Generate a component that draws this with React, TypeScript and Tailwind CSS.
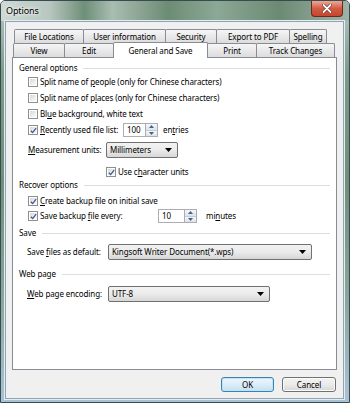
import type { ReactNode } from "react";

type Tab = { label: string; w: string; active?: boolean };

const ROW_BACK: Tab[] = [
  { label: "File Locations",   w: "w-[70px]" },
  { label: "User information", w: "w-[83px]" },
  { label: "Security",         w: "w-[52px]" },
  { label: "Export to PDF",    w: "w-[74px]" },
  { label: "Spelling",         w: "w-[38px]" },
];

const ROW_FRONT: Tab[] = [
  { label: "View",             w: "w-[52px]" },
  { label: "Edit",             w: "w-[50px]" },
  { label: "General and Save", w: "w-[95px]", active: true },
  { label: "Print",            w: "w-[50px]" },
  { label: "Track Changes",    w: "w-[79px]" },
];

function Check({ checked }: { checked?: boolean }) {
  return (
    <span className="w-[10px] h-[10px] shrink-0 border border-[#8e8f8f] bg-white p-px flex">
      <span className="flex-1 flex items-center justify-center bg-gradient-to-br from-[#d9d9d9] to-[#fbfbfb]">
        {checked && (
          <svg viewBox="0 0 8 8" className="w-[7px] h-[7px]">
            <path d="M1 4.3 L3 6.4 L7 1.2" stroke="#3d5a96" strokeWidth="1.5" fill="none" />
          </svg>
        )}
      </span>
    </span>
  );
}

function Arrow() {
  return (
    <svg viewBox="0 0 7 4" className="w-[7px] h-[4px] shrink-0">
      <path d="M0 0 H7 L3.5 4 Z" fill="#000" />
    </svg>
  );
}

function Combo({ value, w }: { value: string; w: string }) {
  return (
    <div className={`${w} h-[16px] shrink-0 rounded-[2px] border border-[#707070] bg-gradient-to-b from-[#f2f2f2] via-[#ebebeb] to-[#d6d6d6] flex items-center pl-[3px] pr-[5px] justify-between`}>
      <span className="whitespace-nowrap">{value}</span>
      <Arrow />
    </div>
  );
}

function Spin({ value, w }: { value: string; w: string }) {
  return (
    <div className="h-[14px] flex shrink-0">
      <div className={`${w} border border-[#abadb3] bg-white flex items-center pl-[3px]`}>{value}</div>
      <div className="w-[12px] flex flex-col border-y border-r border-[#abadb3] bg-white">
        <div className="flex-1 flex items-center justify-center bg-gradient-to-b from-[#f4f7fb] to-[#dbe3ec] border-b border-[#c3cbd5]">
          <svg viewBox="0 0 5 3" className="w-[5px] h-[3px]"><path d="M0 3 H5 L2.5 0 Z" fill="#4b5f80" /></svg>
        </div>
        <div className="flex-1 flex items-center justify-center bg-gradient-to-b from-[#f4f7fb] to-[#dbe3ec]">
          <svg viewBox="0 0 5 3" className="w-[5px] h-[3px]"><path d="M0 0 H5 L2.5 3 Z" fill="#4b5f80" /></svg>
        </div>
      </div>
    </div>
  );
}

function Group({ title, mt }: { title: string; mt: string }) {
  return (
    <div className={`${mt} h-[14px] flex items-center pl-[6px] pr-[6px]`}>
      <span className="whitespace-nowrap">{title}</span>
      <span className="flex-1 h-px bg-[#dcdfd6] ml-[6px] mt-px" />
    </div>
  );
}

function CheckRow({ checked, mt, children }: { checked?: boolean; mt: string; children: ReactNode }) {
  return (
    <div className={`${mt} h-[14px] flex items-center gap-[2px] pl-[15px] whitespace-nowrap`}>
      <Check checked={checked} />
      {children}
    </div>
  );
}

const U = ({ c }: { c: string }) => <span className="underline underline-offset-[1px]">{c}</span>;

function TabBtn({ t }: { t: Tab }) {
  return (
    <div
      className={`${t.w} -ml-px first:ml-0 shrink-0 whitespace-nowrap flex items-center justify-center border-x border-t border-[#898c95] rounded-t-[2px] ${
        t.active ? "h-[16px] -mt-px bg-white relative z-10" : "h-[14px] bg-gradient-to-b from-[#f6f6f6] to-[#dcdcdc]"
      }`}
    >
      {t.label}
    </div>
  );
}

export default function App() {
  return (
    <div className="w-[350px] h-[403px] overflow-hidden rounded-t-[5px] border border-[#3b4a52] bg-[linear-gradient(180deg,#b8c8c3_0%,#7c9a86_18%,#6f8f78_45%,#8aa79a_75%,#a9c3d6_100%)] flex flex-col font-['Noto_Sans',sans-serif] text-[8px] tracking-[-0.1px] leading-none text-black">
      {/* ── TITLE BAR ─────────────────────────────────────── */}
      <div className="h-[20px] shrink-0 flex items-start justify-between bg-[linear-gradient(90deg,#cfd9d5_0%,#b7c7bf_14%,#6e8f78_24%,#a9bdb1_32%,#6d8c74_48%,#8ca896_62%,#6c8a73_80%,#9fb3a8_100%)]">
        <span className="mt-[5px] ml-[5px] text-[9px] text-black [text-shadow:0_0_5px_#ffffff,0_0_3px_#ffffff]">Options</span>
        <div className="mr-[6px] w-[32px] h-[16px] rounded-b-[4px] border border-t-0 border-[#6b2a20] bg-gradient-to-b from-[#e9a897] via-[#d25a43] to-[#c8442d] flex items-center justify-center">
          <svg viewBox="0 0 10 9" className="w-[10px] h-[9px]">
            <path d="M1.5 1 L8.5 8 M8.5 1 L1.5 8" stroke="#5a2018" strokeWidth="3" strokeLinecap="round" />
            <path d="M1.5 1 L8.5 8 M8.5 1 L1.5 8" stroke="#ffffff" strokeWidth="1.8" strokeLinecap="round" />
          </svg>
        </div>
      </div>

      {/* ── CLIENT AREA ───────────────────────────────────── */}
      <div className="ml-[4px] mr-[5px] mb-[3px] flex-1 bg-[#f0f0f0] border border-[#8ea3b3] shadow-[0_0_0_1px_#e4edf3] flex flex-col pt-[7px] px-[6px]">
        {/* tabs */}
        <div className="flex pl-[2px] h-[14px]">
          {ROW_BACK.map((t) => <TabBtn key={t.label} t={t} />)}
        </div>
        <div className="flex items-start pl-[1px] h-[15px] -mb-px relative z-10">
          {ROW_FRONT.map((t) => <TabBtn key={t.label} t={t} />)}
        </div>

        {/* panel */}
        <div className="h-[313px] shrink-0 bg-white border border-[#898c95] flex flex-col">
          <Group title="General options" mt="mt-[3px]" />
          <CheckRow mt="mt-0"><span>Split name of <U c="p" />eople (only for Chinese characters)</span></CheckRow>
          <CheckRow mt="mt-[2px]"><span>Split name of p<U c="l" />aces (only for Chinese characters)</span></CheckRow>
          <CheckRow mt="mt-[2px]"><span>Bl<U c="u" />e background, white text</span></CheckRow>
          <CheckRow checked mt="mt-[2px]">
            <span className="w-[81px] shrink-0"><U c="R" />ecently used file list:</span>
            <Spin value="100" w="w-[23px]" />
            <span className="ml-[3px]">en<U c="t" />ries</span>
          </CheckRow>
          <div className="mt-[6px] h-[14px] flex items-center pl-[15px] whitespace-nowrap">
            <span className="w-[78px] shrink-0"><U c="M" />easurement units:</span>
            <Combo value="Millimeters" w="w-[72px]" />
          </div>
          <div className="mt-[8px] h-[14px] flex items-center gap-[2px] pl-[93px] whitespace-nowrap">
            <Check checked />
            <span>Use c<U c="h" />aracter units</span>
          </div>
          <Group title="Recover options" mt="-mt-px" />
          <CheckRow checked mt="mt-[2px]"><span><U c="C" />reate backup file on initial save</span></CheckRow>
          <CheckRow checked mt="mt-px">
            <span className="w-[116px] shrink-0">Save backup <U c="f" />ile every:</span>
            <Spin value="10" w="w-[27px]" />
            <span className="ml-[7px]">mi<U c="n" />utes</span>
          </CheckRow>
          <Group title="Save" mt="mt-[3px]" />
          <div className="mt-[5px] h-[14px] flex items-center pl-[14px] whitespace-nowrap">
            <span className="w-[81px] shrink-0">Save <U c="f" />iles as default:</span>
            <Combo value="Kingsoft Writer Document(*.wps)" w="w-[204px]" />
          </div>
          <Group title="Web page" mt="mt-[8px]" />
          <div className="mt-[6px] h-[14px] flex items-center pl-[14px] whitespace-nowrap">
            <span className="w-[81px] shrink-0"><U c="W" />eb page encoding:</span>
            <Combo value="UTF-8" w="w-[162px]" />
          </div>
        </div>

        {/* buttons */}
        <div className="mt-[7px] flex justify-end gap-[8px] pr-[1px]">
          <button className="w-[53px] h-[15px] rounded-[3px] border border-[#3c7fb1] shadow-[inset_0_0_0_1px_#bfe4f9] bg-gradient-to-b from-[#edf6fc] via-[#dcedf8] to-[#c2e0f3] flex items-center justify-center">OK</button>
          <button className="w-[54px] h-[15px] rounded-[3px] border border-[#707070] shadow-[inset_0_0_0_1px_#fcfcfc] bg-gradient-to-b from-[#f2f2f2] via-[#ebebeb] to-[#d6d6d6] flex items-center justify-center">Cancel</button>
        </div>
      </div>
    </div>
  );
}
